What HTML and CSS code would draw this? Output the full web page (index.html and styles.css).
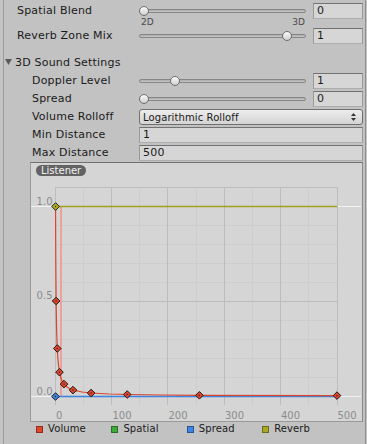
FILE: index.html
```html
<!DOCTYPE html>
<html lang="en">
<head>
    <meta charset="UTF-8">
    <meta name="viewport" content="width=device-width, initial-scale=1.0">
    <title>Audio Source - 3D Sound Settings</title>
    <link rel="stylesheet" href="styles.css">
</head>
<body>

<div class="inspector">
    <div class="row">
        <span class="label">Spatial Blend</span>
        <div class="slider"><div class="track"></div><div class="thumb" style="--v: 0"></div></div>
        <div class="field">0</div>
    </div>
    <div class="blend-scale"><span>2D</span><span>3D</span></div>
    <div class="row">
        <span class="label">Reverb Zone Mix</span>
        <div class="slider"><div class="track"></div><div class="thumb" style="--v: 0.909"></div></div>
        <div class="field">1</div>
    </div>

    <div class="foldout">
        <svg class="fold-arrow" width="7" height="6" viewBox="0 0 7 6"><polygon points="0,0 7,0 3.5,6" fill="#5b5b5b"/></svg>
        <span>3D Sound Settings</span>
    </div>

    <div class="row sub">
        <span class="label">Doppler Level</span>
        <div class="slider"><div class="track"></div><div class="thumb" style="--v: 0.2"></div></div>
        <div class="field">1</div>
    </div>
    <div class="row sub">
        <span class="label">Spread</span>
        <div class="slider"><div class="track"></div><div class="thumb" style="--v: 0"></div></div>
        <div class="field">0</div>
    </div>
    <div class="row sub">
        <span class="label">Volume Rolloff</span>
        <div class="popup">
            <span>Logarithmic Rolloff</span>
            <svg width="5" height="8" viewBox="0 0 5 8"><polygon points="0,3 5,3 2.5,0" fill="#333"/><polygon points="0,5 5,5 2.5,8" fill="#333"/></svg>
        </div>
    </div>
    <div class="row sub">
        <span class="label">Min Distance</span>
        <div class="field wide">1</div>
    </div>
    <div class="row sub">
        <span class="label">Max Distance</span>
        <div class="field wide">500</div>
    </div>

    <!-- editor de curvas: volumen logaritmico 1/d entre 1 y 500 -->
    <div class="curve-box">
        <div class="badge">Listener</div>
        <svg class="curves" width="330" height="258" viewBox="0 0 330 258">
            <defs>
                <g id="key">
                    <path d="M0,-3.8 L3.8,0 L0,3.8 L-3.8,0Z" stroke="#1a1a1a" stroke-width="1"/>
                    <rect x="-0.6" y="-0.6" width="1.2" height="1.2" fill="#3a1a10"/>
                </g>
            </defs>
            <g stroke="#cdcdcd" stroke-width="1">
                <line x1="52.5" y1="24" x2="52.5" y2="242"/>
                <line x1="108.5" y1="24" x2="108.5" y2="242"/>
                <line x1="165.5" y1="24" x2="165.5" y2="242"/>
                <line x1="221.5" y1="24" x2="221.5" y2="242"/>
                <line x1="277.5" y1="24" x2="277.5" y2="242"/>
                <line x1="24" y1="62.5" x2="306" y2="62.5"/>
                <line x1="24" y1="81.5" x2="306" y2="81.5"/>
                <line x1="24" y1="100.5" x2="306" y2="100.5"/>
                <line x1="24" y1="119.5" x2="306" y2="119.5"/>
                <line x1="24" y1="157.5" x2="306" y2="157.5"/>
                <line x1="24" y1="176.5" x2="306" y2="176.5"/>
                <line x1="24" y1="195.5" x2="306" y2="195.5"/>
                <line x1="24" y1="214.5" x2="306" y2="214.5"/>
            </g>
            <g stroke="#bcbcbc" stroke-width="1">
                <line x1="24.5" y1="24" x2="24.5" y2="242"/>
                <line x1="80.5" y1="24" x2="80.5" y2="242"/>
                <line x1="136.5" y1="24" x2="136.5" y2="242"/>
                <line x1="193.5" y1="24" x2="193.5" y2="242"/>
                <line x1="249.5" y1="24" x2="249.5" y2="242"/>
                <line x1="306.5" y1="24" x2="306.5" y2="242"/>
                <line x1="24" y1="24.5" x2="307" y2="24.5"/>
                <line x1="24" y1="138.5" x2="307" y2="138.5"/>
            </g>

            <g fill="#8c8c8c" font-size="10">
                <text x="21.5" y="42" text-anchor="end">1.0</text>
                <text x="21.5" y="136" text-anchor="end">0.5</text>
                <text x="21.5" y="232" text-anchor="end">0.0</text>
                <text x="25" y="256">0</text>
                <text x="81.5" y="256">100</text>
                <text x="137.5" y="256">200</text>
                <text x="194" y="256">300</text>
                <text x="250" y="256">400</text>
                <text x="306.5" y="256">500</text>
            </g>

            <g stroke="#f2f2f2" stroke-width="1">
                <line x1="0" y1="43.5" x2="24" y2="43.5"/>
                <line x1="307" y1="43.5" x2="330" y2="43.5"/>
                <line x1="0" y1="233.5" x2="24" y2="233.5"/>
                <line x1="307" y1="233.5" x2="330" y2="233.5"/>
            </g>

            <rect x="29" y="43" width="2" height="190" fill="#e9a29c"/>
            <line x1="24" y1="43.5" x2="306" y2="43.5" stroke="#a3a320" stroke-width="1.3"/>
            <line x1="24" y1="233.5" x2="306" y2="233.5" stroke="#3d85e2" stroke-width="1.3"/>
            <polyline fill="none" stroke="#d9452b" stroke-width="1.2"
                points="24.56,43 24.7,81 24.85,106.3 25.13,138 25.41,157 25.69,169.7 26.26,185.5 26.82,195 27.38,201.3 28.51,209.25 29.64,214 30.77,217.2 33.02,221.1 35.28,223.5 37.54,225.1 42.05,227.1 51.07,229 60.1,230 78.1,231 96.2,231.5 132.3,232 168.4,232.3 306,232.6"/>

            <g fill="#e0452c">
                <use href="#key" x="25.1" y="138"/>
                <use href="#key" x="26.3" y="185.5"/>
                <use href="#key" x="28.5" y="209.2"/>
                <use href="#key" x="33" y="221.1"/>
                <use href="#key" x="42" y="227.1"/>
                <use href="#key" x="60.1" y="230"/>
                <use href="#key" x="96.2" y="231.5"/>
                <use href="#key" x="168.4" y="232.3"/>
                <use href="#key" x="306" y="232.6"/>
            </g>
            <use href="#key" x="24.6" y="43.5" fill="#b4b41e"/>
            <use href="#key" x="24.5" y="233.5" fill="#3d85e2"/>
        </svg>
    </div>

    <div class="legend">
        <div class="legend-item"><span class="swatch volume"></span>Volume</div>
        <div class="legend-item"><span class="swatch spatial"></span>Spatial</div>
        <div class="legend-item"><span class="swatch spread"></span>Spread</div>
        <div class="legend-item"><span class="swatch reverb"></span>Reverb</div>
    </div>
</div>

</body>
</html>
```

FILE: styles.css
```css
html, body {
    margin: 0;
    padding: 0;
    height: 444px;
    overflow: hidden;
    background-color: #c4c4c4;
}

body {
    font-family: "DejaVu Sans", Verdana, sans-serif;
    font-size: 11px;
    letter-spacing: 0.2px;
    color: #1a1a1a;
}

.inspector {
    margin-left: 3px;
    width: 361px;
    height: 442px;
    padding-top: 3px;
    background-color: #c2c2c2;
    border-left: 1px solid #9c9c9c;
    border-right: 1px solid #8e8e8e;
    border-bottom: 1px solid #8e8e8e;
    box-sizing: border-box;
    box-sizing: content-box;
}

.inspector > :first-child {
    margin-top: 0;
}

.row {
    display: flex;
    align-items: center;
    height: 16px;
    padding-right: 2px;
    margin-top: 2px;
}

.label {
    width: 135px;
    padding-left: 13px;
    box-sizing: border-box;
    line-height: 16px;
    white-space: nowrap;
}

.row.sub .label {
    padding-left: 28px;
}

.slider {
    position: relative;
    flex: 1;
    height: 16px;
    margin-right: 7px;
}

.track {
    margin-top: 6px;
    height: 4px;
    box-sizing: border-box;
    border: 1px solid #878787;
    border-radius: 3px;
    background: linear-gradient(#a9a9a9, #c9c9c9);
}

.thumb {
    position: absolute;
    top: 3px;
    left: calc(var(--v) * (100% - 10px));
    width: 10px;
    height: 10px;
    box-sizing: border-box;
    border: 1px solid #6e6e6e;
    border-radius: 50%;
    background: linear-gradient(#fafafa, #cfcfcf);
}

.field {
    width: 50px;
    height: 16px;
    box-sizing: border-box;
    padding-left: 3px;
    line-height: 14px;
    background-color: #d6d6d6;
    border: 1px solid #999;
    border-top-color: #727272;
    border-bottom-color: #adadad;
}

.field.wide {
    flex: 1;
    width: auto;
}

.blend-scale {
    display: flex;
    justify-content: space-between;
    margin-left: 137px;
    width: 164px;
    height: 7px;
    font-size: 9px;
    line-height: 7px;
    letter-spacing: 0;
    color: #4a4a4a;
}

.blend-scale + .row {
    margin-top: 2px;
}

.foldout {
    display: flex;
    align-items: center;
    height: 16px;
    margin-top: 10px;
    margin-bottom: 3px;
    padding-left: 1px;
}

.fold-arrow {
    margin-right: 3px;
}

.popup {
    flex: 1;
    display: flex;
    align-items: center;
    justify-content: space-between;
    height: 16px;
    box-sizing: border-box;
    padding: 0 6px 0 3px;
    font-size: 10px;
    letter-spacing: 0.1px;
    border: 1px solid #707070;
    border-radius: 3px;
    background: linear-gradient(#ededed, #d3d3d3);
}

.curve-box {
    position: relative;
    margin: 1px 2px 0 26px;
    border: 1px solid #9a9a9a;
    border-top-color: #707070;
    border-right-color: #8a8a8a;
    background-color: #d5d5d5;
}

.curves {
    display: block;
    font-family: "DejaVu Sans", Verdana, sans-serif;
    letter-spacing: 0;
}

/* etiqueta flotante sobre el grafico */
.badge {
    position: absolute;
    left: 5px;
    top: 2px;
    height: 11px;
    padding: 0 5px;
    border-radius: 6px;
    background-color: #636363;
    color: #f2f2f2;
    font-size: 10px;
    line-height: 11px;
    letter-spacing: 0;
}

.legend {
    display: grid;
    grid-template-columns: repeat(4, 75.4px);
    margin-left: 26px;
    padding-left: 6px;
    height: 20px;
    font-size: 10px;
    line-height: 12px;
    letter-spacing: 0.1px;
}

.legend-item {
    display: flex;
    align-items: center;
    height: 12px;
    padding-top: 1px;
}

.swatch {
    width: 7px;
    height: 7px;
    box-sizing: border-box;
    margin-right: 5px;
    border: 1px solid rgba(0, 0, 0, 0.35);
}

.swatch.volume { background-color: #e0452c; }
.swatch.spatial { background-color: #3faa3a; }
.swatch.spread { background-color: #3d85e2; }
.swatch.reverb { background-color: #a8a826; }
```
